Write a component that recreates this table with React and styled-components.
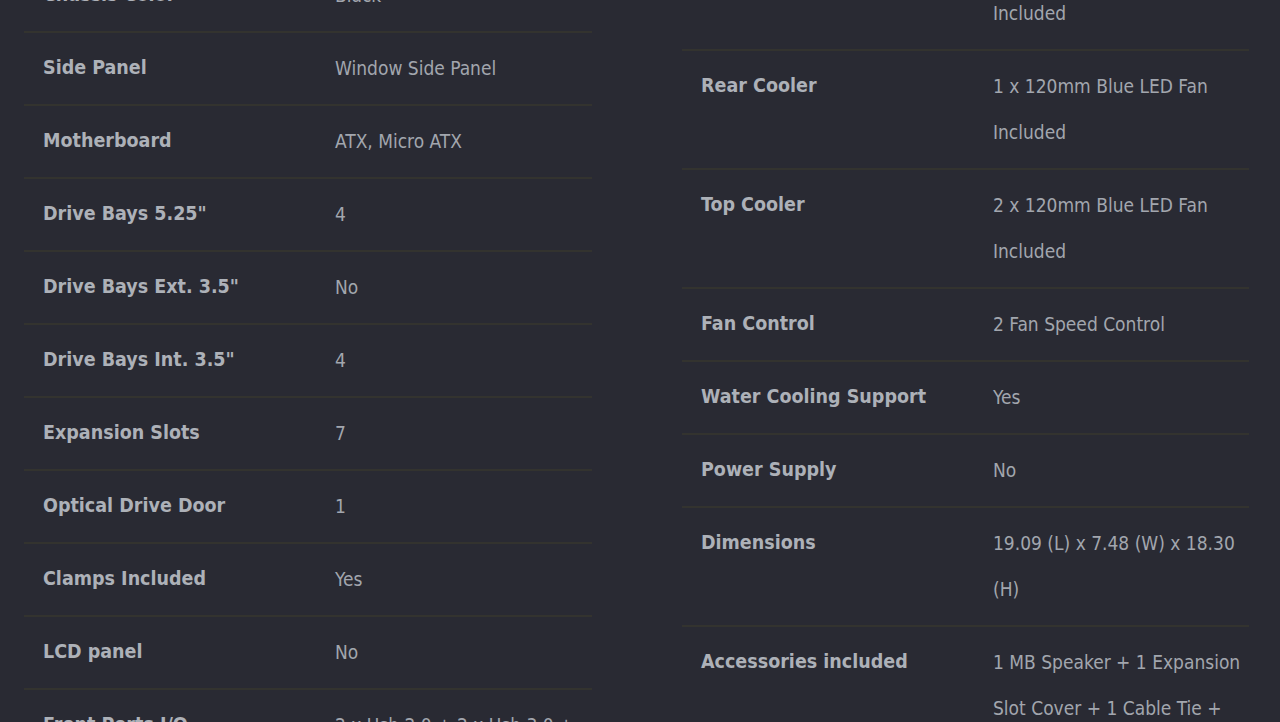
import React from 'react';
import styled, { createGlobalStyle } from 'styled-components';

const GlobalStyle = createGlobalStyle`
    html, body {
        margin: 0;
        padding: 0;
        background: #292a33;
        overflow: hidden;
    }
    body {
        font-family: "DejaVu Sans Condensed", "DejaVu Sans", sans-serif;
        font-stretch: condensed;
    }
`;

const Page = styled.div`
    height: 722px;
    overflow: hidden;
    background: #292a33;
`;

const Specs = styled.div`
    display: grid;
    grid-template-columns: 568px 567px;
    column-gap: 90px;
    align-items: start;
    padding: 0 31px 0 24px;
    margin-top: -186px;
`;

const Table = styled.div`
    display: flex;
    flex-direction: column;
    margin-top: ${({ shift }) => shift || 0}px;
`;

const Row = styled.div`
    display: grid;
    grid-template-columns: 311px 1fr;
    padding: 12px 0 13px;
    border-bottom: 2px solid #33332f;
`;

const Label = styled.div`
    padding-left: 19px;
    font-size: 19.5px;
    font-weight: bold;
    line-height: 46px;
    color: #adb1b8;
`;

const Value = styled.div`
    padding-right: 4px;
    font-size: 19px;
    line-height: 46px;
    color: #a2a6ae;
`;

const leftSpecs = [
    ['Model', 'CC-9011'],
    ['Case Type', 'Mid Tower'],
    ['Chassis Color', 'Black'],
    ['Side Panel', 'Window Side Panel'],
    ['Motherboard', 'ATX, Micro ATX'],
    ['Drive Bays 5.25"', '4'],
    ['Drive Bays Ext. 3.5"', 'No'],
    ['Drive Bays Int. 3.5"', '4'],
    ['Expansion Slots', '7'],
    ['Optical Drive Door', '1'],
    ['Clamps Included', 'Yes'],
    ['LCD panel', 'No'],
    ['Front Ports I/O', '2 x Usb 2.0 + 2 x Usb 3.0 + Audio'],
];

const rightSpecs = [
    ['Material', 'SECC Steel Chassis, Plastic Front Bezel'],
    ['Front Cooler', '1 x 120mm Blue LED Fan Included'],
    ['Rear Cooler', '1 x 120mm Blue LED Fan Included'],
    ['Top Cooler', '2 x 120mm Blue LED Fan Included'],
    ['Fan Control', '2 Fan Speed Control'],
    ['Water Cooling Support', 'Yes'],
    ['Power Supply', 'No'],
    ['Dimensions', '19.09 (L) x 7.48 (W) x 18.30 (H)'],
    ['Accessories included', '1 MB Speaker + 1 Expansion Slot Cover + 1 Cable Tie + Screws'],
];

const SpecTable = ({ rows, shift }) => (
    <Table shift={shift}>
        {rows.map(([label, value]) => (
            <Row key={label}>
                <Label>{label}</Label>
                <Value>{value}</Value>
            </Row>
        ))}
    </Table>
);

export default function App() {
    return (
        <>
            <GlobalStyle />
            <Page>
                <Specs>
                    <SpecTable rows={leftSpecs} />
                    <SpecTable rows={rightSpecs} shift={-1} />
                </Specs>
            </Page>
        </>
    );
}
